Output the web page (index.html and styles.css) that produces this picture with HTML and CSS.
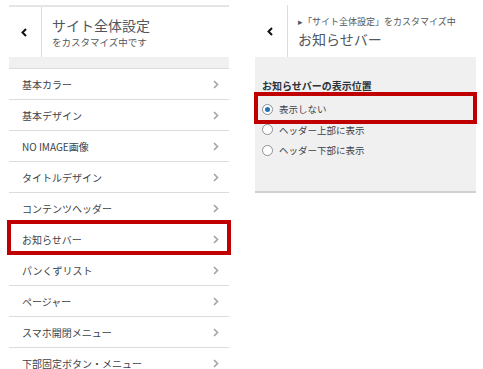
FILE: index.html
```html
<!DOCTYPE html>
<html lang="ja">
<head>
<meta charset="utf-8">
<link rel="stylesheet" href="styles.css">
</head>
<body>
<div class="page">
  <section class="panel panel-left">
    <header class="head head-left">
      <div class="back">
        <svg width="6" height="9" viewBox="0 0 6 9"><polyline points="5,1 1.5,4.5 5,8" fill="none" stroke="#111" stroke-width="2"/></svg>
      </div>
      <div class="head-text">
        <div class="title">サイト全体設定</div>
        <div class="sub">をカスタマイズ中です</div>
      </div>
    </header>
    <div class="band"></div>
    <ul class="menu">
      <li class="item"><span>基本カラー</span><svg class="chev" width="6" height="9" viewBox="0 0 6 9"><polyline points="1,1 4.5,4.5 1,8" fill="none" stroke="#a0a5aa" stroke-width="1.6"/></svg></li>
      <li class="item"><span>基本デザイン</span><svg class="chev" width="6" height="9" viewBox="0 0 6 9"><polyline points="1,1 4.5,4.5 1,8" fill="none" stroke="#a0a5aa" stroke-width="1.6"/></svg></li>
      <li class="item"><span>NO IMAGE画像</span><svg class="chev" width="6" height="9" viewBox="0 0 6 9"><polyline points="1,1 4.5,4.5 1,8" fill="none" stroke="#a0a5aa" stroke-width="1.6"/></svg></li>
      <li class="item"><span>タイトルデザイン</span><svg class="chev" width="6" height="9" viewBox="0 0 6 9"><polyline points="1,1 4.5,4.5 1,8" fill="none" stroke="#a0a5aa" stroke-width="1.6"/></svg></li>
      <li class="item"><span>コンテンツヘッダー</span><svg class="chev" width="6" height="9" viewBox="0 0 6 9"><polyline points="1,1 4.5,4.5 1,8" fill="none" stroke="#a0a5aa" stroke-width="1.6"/></svg></li>
      <li class="item item-hl"><span>お知らせバー</span><svg class="chev" width="6" height="9" viewBox="0 0 6 9"><polyline points="1,1 4.5,4.5 1,8" fill="none" stroke="#a0a5aa" stroke-width="1.6"/></svg></li>
      <li class="item"><span>パンくずリスト</span><svg class="chev" width="6" height="9" viewBox="0 0 6 9"><polyline points="1,1 4.5,4.5 1,8" fill="none" stroke="#a0a5aa" stroke-width="1.6"/></svg></li>
      <li class="item"><span>ページャー</span><svg class="chev" width="6" height="9" viewBox="0 0 6 9"><polyline points="1,1 4.5,4.5 1,8" fill="none" stroke="#a0a5aa" stroke-width="1.6"/></svg></li>
      <li class="item"><span>スマホ開閉メニュー</span><svg class="chev" width="6" height="9" viewBox="0 0 6 9"><polyline points="1,1 4.5,4.5 1,8" fill="none" stroke="#a0a5aa" stroke-width="1.6"/></svg></li>
      <li class="item"><span>下部固定ボタン・メニュー</span><svg class="chev" width="6" height="9" viewBox="0 0 6 9"><polyline points="1,1 4.5,4.5 1,8" fill="none" stroke="#a0a5aa" stroke-width="1.6"/></svg></li>
    </ul>
  </section>

  <section class="panel panel-right">
    <header class="head head-right">
      <div class="back back-right">
        <svg width="6" height="9" viewBox="0 0 6 9"><polyline points="5,1 1.5,4.5 5,8" fill="none" stroke="#111" stroke-width="2"/></svg>
      </div>
      <div class="head-text">
        <div class="crumb">▸「サイト全体設定」をカスタマイズ中</div>
        <div class="title">お知らせバー</div>
      </div>
    </header>
    <div class="options">
      <div class="opt-label">お知らせバーの表示位置</div>
      <label class="radio radio-hl"><span class="dot checked"></span><span>表示しない</span></label>
      <label class="radio"><span class="dot"></span><span>ヘッダー上部に表示</span></label>
      <label class="radio"><span class="dot"></span><span>ヘッダー下部に表示</span></label>
    </div>
  </section>
</div>
</body>
</html>
```

FILE: styles.css
```css
html, body {
  margin: 0;
  padding: 0;
  background: #fff;
}
body {
  font-family: "Noto Sans CJK JP", "Noto Sans", sans-serif;
  color: #3c434a;
  width: 483px;
  height: 369px;
  overflow: hidden;
}
.page {
  display: flex;
  align-items: flex-start;
}
.panel {
  display: flex;
  flex-direction: column;
}
.panel-left {
  margin-left: 9px;
  width: 220px;
  margin-top: 5px;
  border-top: 2px solid #e5e5e5;
}
.panel-right {
  margin-left: 26px;
  width: 221px;
  margin-top: 5px;
}
.head {
  display: flex;
  background: #fff;
}
.head-left {
  height: 50px;
}
.head-right {
  height: 52px;
}
.back {
  width: 33px;
  flex: none;
  border-right: 1px solid #dcdcde;
  display: flex;
  align-items: center;
  justify-content: center;
  padding-right: 3px;
  box-sizing: border-box;
}
.back-right {
  width: 33px;
}
.head-text {
  padding-left: 10px;
  display: flex;
  flex-direction: column;
  justify-content: center;
}
.title {
  font-size: 14px;
  line-height: 18px;
  color: #50575e;
}
.sub {
  font-size: 9.5px;
  line-height: 14px;
  color: #50575e;
  margin-top: 1px;
}
.crumb {
  font-size: 9px;
  line-height: 13px;
  color: #50575e;
  margin-bottom: 2px;
}
.band {
  height: 11px;
  background: #f0f0f1;
  border-bottom: 1px solid #dcdcde;
}
.menu {
  list-style: none;
  margin: 0;
  padding: 0;
}
.item {
  height: 30px;
  border-bottom: 1px solid #dcdcde;
  display: flex;
  align-items: center;
  justify-content: space-between;
  padding: 0 10px 0 13px;
  font-size: 10px;
  color: #3c434a;
  position: relative;
}
.chev {
  display: block;
}
.item-hl::after {
  content: "";
  position: absolute;
  top: -4px;
  bottom: -1px;
  left: -2px;
  right: -2px;
  border: 4px solid #c00000;
}
.options {
  background: #f0f0f1;
  border-bottom: 2px solid #d0d0d0;
  padding: 22px 0 30px;
}
.opt-label {
  font-size: 10px;
  line-height: 14px;
  font-weight: bold;
  color: #2c3338;
  padding-left: 7px;
  margin-bottom: 6px;
}
.radio {
  display: flex;
  align-items: center;
  height: 20.5px;
  padding-left: 7px;
  font-size: 9.5px;
  color: #3c434a;
  position: relative;
}
.dot {
  width: 9px;
  height: 9px;
  border: 1px solid #8c8f94;
  border-radius: 50%;
  background: #fff;
  margin-right: 6px;
  display: flex;
  align-items: center;
  justify-content: center;
  flex: none;
}
.dot.checked::before {
  content: "";
  width: 5px;
  height: 5px;
  border-radius: 50%;
  background: #2271b1;
}
.radio-hl::after {
  content: "";
  position: absolute;
  top: -7px;
  bottom: -4px;
  left: -1px;
  right: -1px;
  border: 4px solid #c00000;
}
```
